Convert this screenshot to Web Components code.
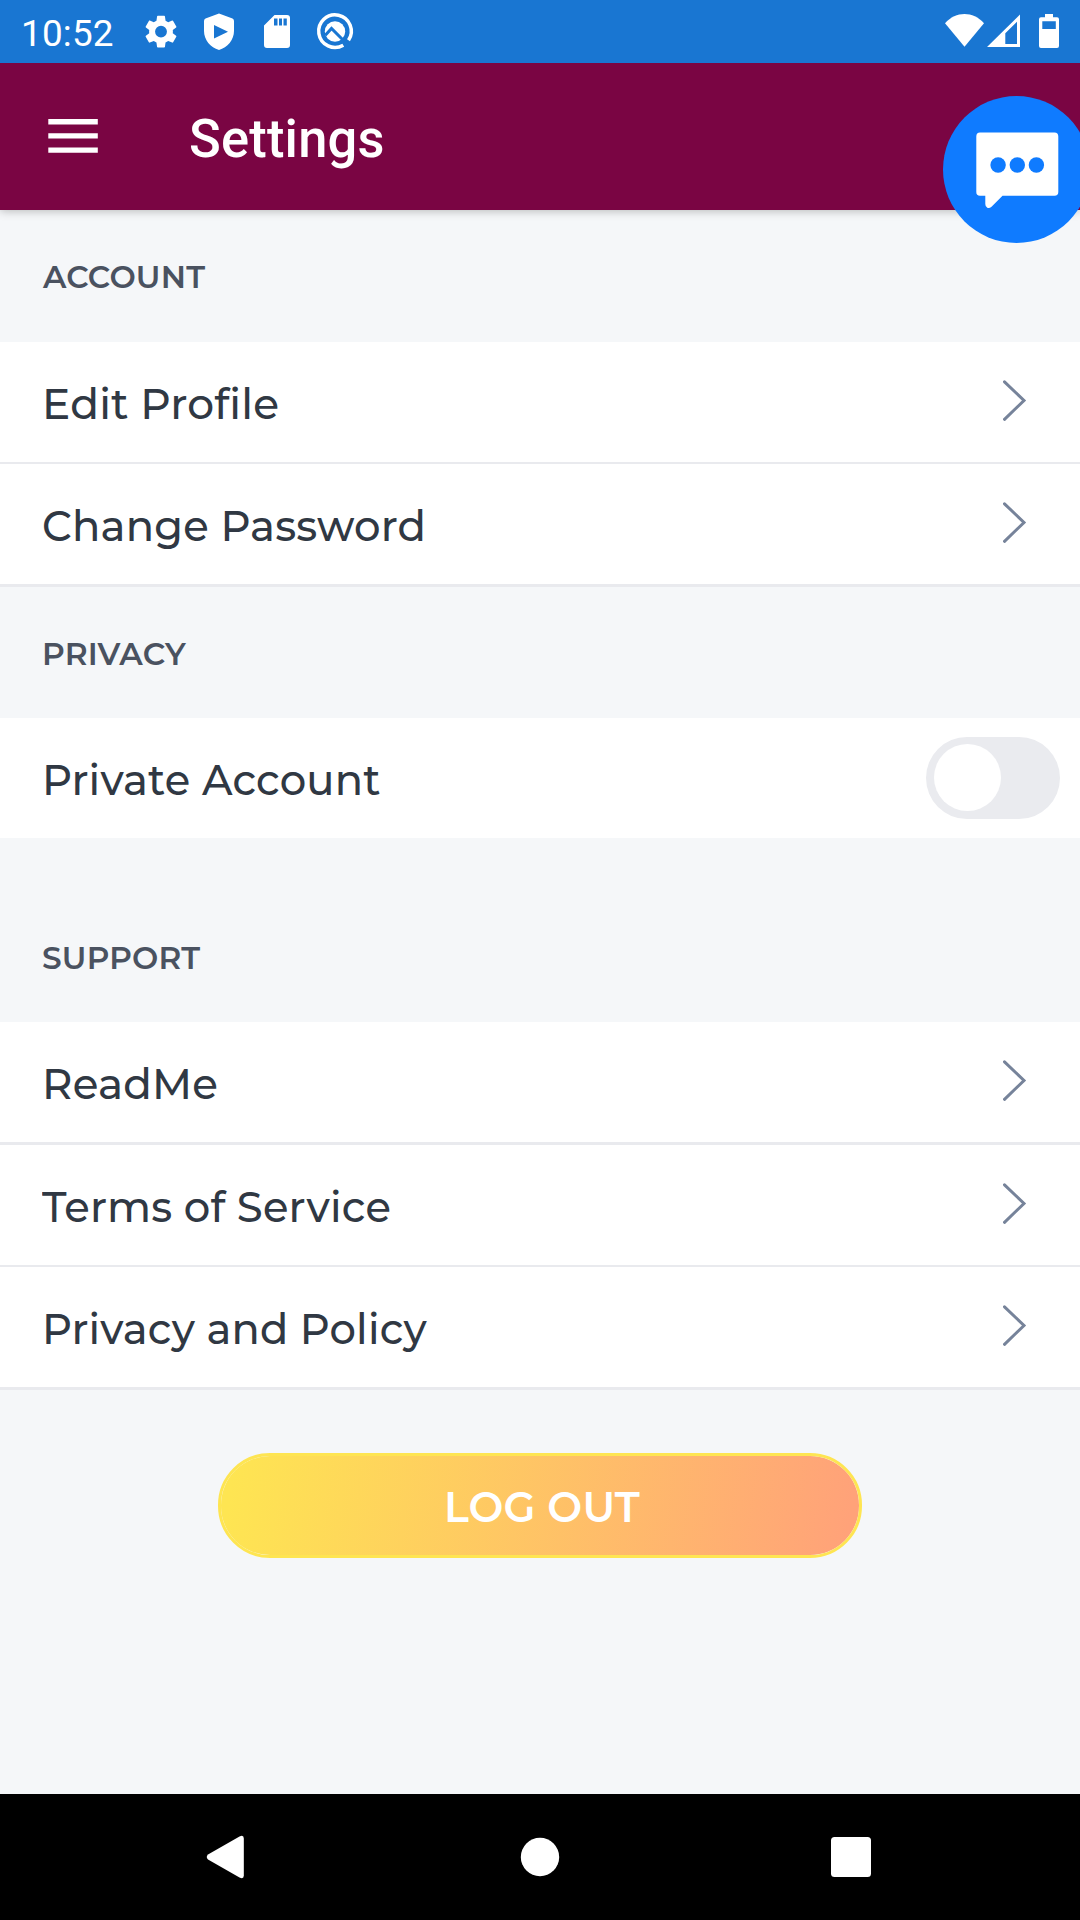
<!DOCTYPE html>
<html lang="en">
<head>
<meta charset="utf-8">
<title>Settings</title>
<style>
html,body{margin:0;padding:0;background:#f5f7f9}
body{width:1080px;height:1920px;overflow:hidden}
</style>
</head>
<body>
<settings-screen></settings-screen>
<script>
const define = (name, html, extra) => customElements.define(name, class extends HTMLElement {
  connectedCallback() {
    if (this.shadowRoot) return;
    this.attachShadow({ mode: 'open' }).innerHTML = html;
    if (extra) extra(this);
  }
});

// Text stretched horizontally so that its inked width equals the "ink" attribute.
define('fit-text', `<style>
:host{display:block;white-space:pre;letter-spacing:.2px;font-variant-ligatures:none}
span{display:inline-block;transform-origin:0 50%}
</style><span><slot></slot></span>`, el => {
  const cs = getComputedStyle(el);
  const ctx = document.createElement('canvas').getContext('2d');
  ctx.font = `${cs.fontWeight} ${cs.fontSize} ${cs.fontFamily}`;
  ctx.letterSpacing = '0.2px';
  const m = ctx.measureText(el.textContent);
  const k = Number(el.getAttribute('ink')) / (m.actualBoundingBoxLeft + m.actualBoundingBoxRight);
  el.shadowRoot.querySelector('span').style.transform =
    `translateX(${(m.actualBoundingBoxLeft * k).toFixed(2)}px) scaleX(${k.toFixed(4)})`;
});

define('status-bar', `<style>
:host{display:flex;height:63px;background:#1976d2;color:#fff;justify-content:space-between}
div{display:flex}
fit-text{margin-left:24px;width:114px;font:400 36.5px/67px Roboto,sans-serif}
svg{display:block}
</style>
<div><fit-text ink="89">10:52</fit-text>
<svg width="230" height="63" viewBox="138 0 230 63" fill="#fff">
<path transform="translate(141.2 11.8) scale(1.65)" d="M19.14 12.94c.04-.3.06-.61.06-.94 0-.32-.02-.64-.07-.94l2.03-1.58a.49.49 0 0 0 .12-.61l-1.92-3.32a.488.488 0 0 0-.59-.22l-2.39.96c-.5-.38-1.03-.7-1.62-.94l-.36-2.54a.484.484 0 0 0-.48-.41h-3.84c-.24 0-.43.17-.47.41l-.36 2.54c-.59.24-1.13.57-1.62.94l-2.39-.96c-.22-.08-.47 0-.59.22L2.74 8.87c-.12.21-.08.47.12.61l2.03 1.58c-.05.3-.09.63-.09.94s.02.64.07.94l-2.03 1.58a.49.49 0 0 0-.12.61l1.92 3.32c.12.22.37.29.59.22l2.39-.96c.5.38 1.03.7 1.62.94l.36 2.54c.05.24.24.41.48.41h3.84c.24 0 .44-.17.47-.41l.36-2.54c.59-.24 1.13-.56 1.62-.94l2.39.96c.22.08.47 0 .59-.22l1.92-3.32c.12-.22.07-.47-.12-.61zM12 15.6a3.6 3.6 0 1 1 0-7.2 3.6 3.6 0 0 1 0 7.2z"/>
<path fill-rule="evenodd" d="M219 13.6 232.5 18.6Q234 19.2 234 21V31C234 39.8 227.5 47.6 219 49.9C210.5 47.6 204 39.8 204 31V21Q204 19.2 205.500 18.600ZM214 25V38.400L228 31.700Z"/>
<path fill-rule="evenodd" d="M274.500 15H287Q290 15 290 18V45Q290 48 287 48H267Q264 48 264 45V25.500ZM274 18.500V25.500H277.500V18.500ZM279 18.500V25.500H282V18.500ZM283.500 18.500V25.500H286.800V18.500Z"/>
<path d="M343.300 45.200A16.300 16.300 0 1 1 348.500 40.300" fill="none" stroke="#fff" stroke-width="3.500"/>
<circle cx="335" cy="31.500" r="10.200"/>
<path d="M325.300 35.300 331.500 28.500 349 46" fill="none" stroke="#1976d2" stroke-width="3"/>
</svg></div>
<svg width="150" height="63" viewBox="930 0 150 63" fill="#fff">
<path d="M945 23.300C956 11 973 11 984 23.300L964.500 46.700Z"/>
<path fill-rule="evenodd" d="M987 47 1020 14.500V47ZM1005.300 33.300V44H1017V21.800Z"/>
<path fill-rule="evenodd" d="M1045 14H1053V17.300H1057Q1059 17.300 1059 19.300V46Q1059 48 1057 48H1041Q1039 48 1039 46V19.300Q1039 17.300 1041 17.300H1045ZM1042.300 21.300V29H1055.800V21.300Z"/>
</svg>`);

define('app-bar', `<style>
:host{display:flex;height:147px;background:#7a0543;color:#fff;box-shadow:0 1px 9px rgba(0,0,0,.26);clip-path:inset(0 0 -16px 0);position:relative}
svg{display:block;margin-left:48px;width:50px;height:147px}
fit-text{margin-left:92px;font:500 53.400px/152px Roboto,sans-serif}
</style>
<svg viewBox="0 0 50 147" fill="#fff"><path d="M.3 56H49.800V61.400H.3ZM.3 70.200H49.800V75.600H.3ZM.3 84.400H49.800V89.800H.3Z"/></svg>
<fit-text ink="193">Settings</fit-text>`);

define('section-title', `<style>
:host{display:flex;box-sizing:border-box;flex-direction:column;justify-content:flex-end;height:131px;padding:0 0 44px 42px;color:#4a5260;font:600 31.500px/40px Montserrat,Inter,sans-serif}
</style><slot></slot>`);

define('settings-row', `<style>
:host{display:flex;height:120px;background:#fff;color:#303843;justify-content:space-between;align-items:center;font:500 42.500px/60px Montserrat,Inter,sans-serif;border-bottom:0 solid #e9eaee}
.label{padding:3px 0 0 45.500px}
</style><div class="label"><slot></slot></div><slot name="end"></slot>`);

define('chevron-icon', `<style>:host{display:block;width:77px;height:120px}svg{display:block}</style>
<svg width="77" height="120" viewBox="0 0 77 120"><path d="M1.500 39.800 21 58.500 1.500 77.300" fill="none" stroke="#76839a" stroke-width="3" stroke-linecap="round"/></svg>`);

define('toggle-switch', `<style>
:host{display:flex;box-sizing:border-box;width:134px;height:82px;border-radius:41px;background:#eaebef;padding:7px 8px;margin-right:20px}
i{width:67px;height:67px;border-radius:50%;background:#fff}
</style><i></i>`);

define('logout-button', `<style>
:host{display:flex;box-sizing:border-box;width:644px;height:105px;margin:63px 0 0 218px;border:3px solid #fee552;border-radius:52px;background:linear-gradient(97deg,#fee552 2%,#ffa279 98%) padding-box;color:#fff;font:600 42.500px/103px Montserrat,Inter,sans-serif}
fit-text{margin-left:227px}
</style><fit-text ink="192">LOG OUT</fit-text>`);

define('chat-bubble', `<style>
:host{display:block;position:absolute;left:943px;top:96px;width:137px;height:148px;z-index:2}
svg{display:block}
</style><svg width="137" height="148" viewBox="943 96 137 148"><circle cx="1016.500" cy="169.500" r="73.500" fill="#0f7bff"/>
<path fill="#fff" d="M980 132.600H1054.500Q1058.300 132.600 1058.300 136.400V192Q1058.300 195.800 1054.500 195.800H1002.500L991.500 206.700Q989.500 208.500 987.300 207.800Q985.300 207 985.300 204V195.800H980Q976.300 195.800 976.300 192V136.400Q976.300 132.600 980 132.600Z"/>
<g fill="#0f7bff"><circle cx="998.100" cy="165" r="7.700"/><circle cx="1017.300" cy="165" r="7.700"/><circle cx="1036.400" cy="165" r="7.700"/></g></svg>`);

define('nav-bar', `<style>
:host{display:block;height:126px;margin-top:auto;background:#000}
svg{display:block}
</style><svg width="1080" height="126" viewBox="0 1794 1080 126" fill="#fff">
<path d="M208 1854.500 239.500 1836.500Q243.800 1834.500 243.800 1838.500V1875.500Q243.800 1879.500 239.500 1877.500L208 1859.500Q205.500 1857 208 1854.500Z"/>
<circle cx="540" cy="1857" r="19.200"/><rect x="831" y="1837" width="40" height="40" rx="3.500"/></svg>`);

define('settings-screen', `<style>
:host{display:flex;flex-direction:column;position:relative;width:1080px;height:1920px;background:#f5f7f9;overflow:hidden}
.first{height:132px;padding-bottom:45px}
.spaced{height:184px}
.thin{border-bottom-width:2px}
.thick{border-bottom-width:3px}
.near{margin-left:-3.500px}
</style>
<status-bar></status-bar>
<app-bar></app-bar>
<section-title class="first"><fit-text ink="163">ACCOUNT</fit-text></section-title>
<settings-row class="thin"><fit-text ink="232">Edit Profile</fit-text><chevron-icon slot="end"></chevron-icon></settings-row>
<settings-row class="thick"><fit-text ink="379" style="margin-left:-1.5px">Change Password</fit-text><chevron-icon slot="end"></chevron-icon></settings-row>
<section-title><fit-text ink="143" style="margin-left:2px">PRIVACY</fit-text></section-title>
<settings-row><fit-text ink="334">Private Account</fit-text><toggle-switch slot="end"></toggle-switch></settings-row>
<section-title class="spaced"><fit-text ink="157" style="margin-left:1px">SUPPORT</fit-text></section-title>
<settings-row class="thick"><fit-text ink="171">ReadMe</fit-text><chevron-icon slot="end"></chevron-icon></settings-row>
<settings-row class="thin"><fit-text ink="348" class="near">Terms of Service</fit-text><chevron-icon slot="end"></chevron-icon></settings-row>
<settings-row class="thick"><fit-text ink="381">Privacy and Policy</fit-text><chevron-icon slot="end"></chevron-icon></settings-row>
<logout-button></logout-button>
<nav-bar></nav-bar>
<chat-bubble></chat-bubble>`);
</script>
</body>
</html>
